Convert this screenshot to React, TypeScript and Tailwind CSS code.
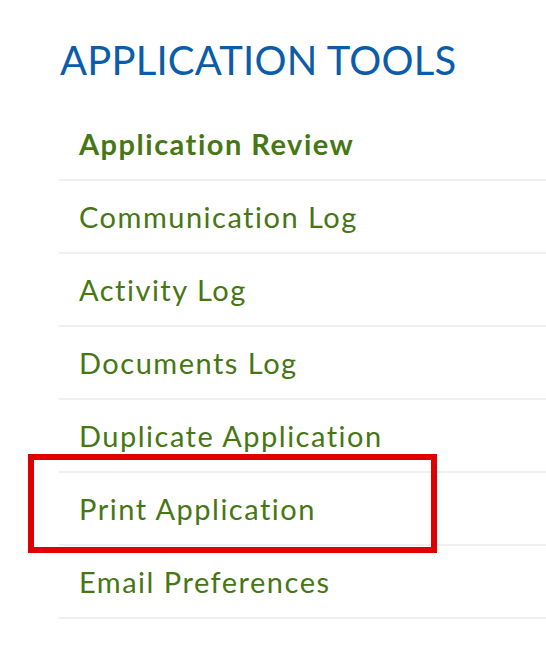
const tools = [
  { label: "Application Review", current: true },
  { label: "Communication Log" },
  { label: "Activity Log" },
  { label: "Documents Log" },
  { label: "Duplicate Application" },
  { label: "Print Application", highlighted: true },
  { label: "Email Preferences" },
];

export default function App() {
  return (
    <div className="min-h-[648px] bg-white pl-[59px] pt-[36px] font-['Lato','Open_Sans',sans-serif]">
      <h2 className="pl-px text-[40px] leading-[48px] tracking-[0.2px] text-[#0b5ca9]">APPLICATION TOOLS</h2>

      <ul className="mt-[24px]">
        {tools.map((tool) => (
          <li key={tool.label} className="relative border-b-2 border-[#f0f0f0]">
            <a
              href="#"
              className={
                "block h-[71px] pl-[20px] pt-[16px] text-[29px] leading-[40px] tracking-[1.5px] text-[#477615] " +
                (tool.current ? "font-bold" : "font-normal")
              }
            >
              {tool.label}
            </a>
            {tool.highlighted && (
              <span className="pointer-events-none absolute left-[-31px] top-[-19px] h-[99px] w-[409px] border-[6px] border-[#e00000]" />
            )}
          </li>
        ))}
      </ul>
    </div>
  );
}
